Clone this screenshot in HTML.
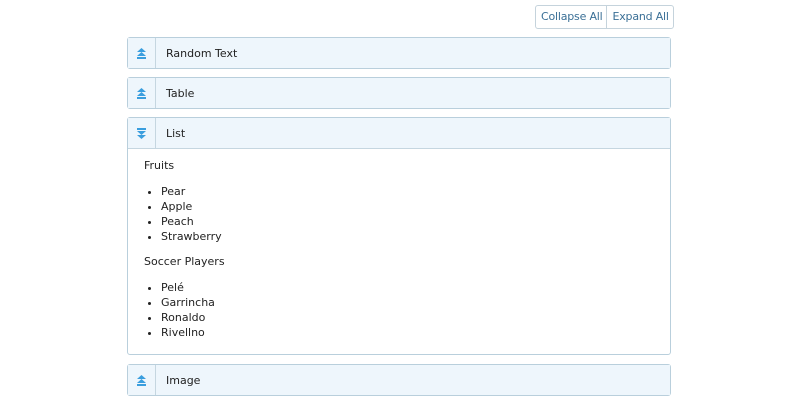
<!DOCTYPE html>
<html><head><style>
body{margin:0;width:800px;height:400px;background:#fff;font-family:"DejaVu Sans","Liberation Sans",sans-serif;font-size:11px;color:#222;position:relative;overflow:hidden}
.btns{position:absolute;left:535px;top:5px;height:22px;border:1px solid #c5d3dc;border-radius:3px;display:flex;background:#fff}
.btns span{display:block;line-height:22px;padding:0 4px 0 5px;color:#3a6f96;letter-spacing:-0.2px}
.btns span+span{border-left:1px solid #c5d3dc}
.p{position:absolute;left:127px;width:542px;border:1px solid #b9cfdc;border-radius:3px;background:#fff}
.h{height:30px;background:#eef6fc;position:relative}
.h .ic{position:absolute;left:0;top:0;width:27px;height:30px;border-right:1px solid #c5d6e0}
.h .t{position:absolute;left:38px;top:1px;line-height:30px}
.c{border-top:1px solid #c5d6e0;padding:10px 16px}
.c p{margin:0 0 12px}
.c ul{margin:0 0 11px;padding-left:17px;line-height:15px}
svg{position:absolute;left:8px;top:10px}
</style></head><body>
<div class="btns"><span>Collapse All</span><span>Expand All</span></div>
<div class="p" style="top:37px"><div class="h"><div class="ic"><svg width="11" height="11" viewBox="0 0 11 11"><path d="M5.5 0L10 4H1z M5.5 4L10 8H1z" fill="#3a9ede"/><rect x="1" y="9" width="9" height="2" fill="#3a9ede"/></svg></div><div class="t">Random Text</div></div></div>
<div class="p" style="top:77px"><div class="h"><div class="ic"><svg width="11" height="11" viewBox="0 0 11 11"><path d="M5.5 0L10 4H1z M5.5 4L10 8H1z" fill="#3a9ede"/><rect x="1" y="9" width="9" height="2" fill="#3a9ede"/></svg></div><div class="t">Table</div></div></div>
<div class="p" style="top:117px;height:236px"><div class="h"><div class="ic"><svg width="11" height="11" viewBox="0 0 11 11"><rect x="1" y="0" width="9" height="2" fill="#3a9ede"/><path d="M1 3H10L5.5 7z M1 7H10L5.5 11z" fill="#3a9ede"/></svg></div><div class="t">List</div></div>
<div class="c"><p>Fruits</p><ul><li>Pear</li><li>Apple</li><li>Peach</li><li>Strawberry</li></ul><p>Soccer Players</p><ul><li>Pelé</li><li>Garrincha</li><li>Ronaldo</li><li>Rivellno</li></ul></div></div>
<div class="p" style="top:364px"><div class="h"><div class="ic"><svg width="11" height="11" viewBox="0 0 11 11"><path d="M5.5 0L10 4H1z M5.5 4L10 8H1z" fill="#3a9ede"/><rect x="1" y="9" width="9" height="2" fill="#3a9ede"/></svg></div><div class="t">Image</div></div></div>
</body></html>
